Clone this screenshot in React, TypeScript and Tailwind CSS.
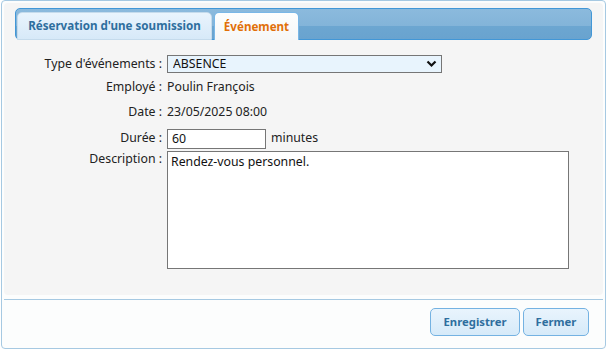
export default function App() {
  return (
    <div className="h-[350px] w-[607px] bg-white font-['Noto_Sans',sans-serif] text-[12.3px] text-[#222]">
      <div className="ml-px flex h-[349px] w-[605px] flex-col rounded-[4px] border border-[#a6c9e2] bg-[#fcfdfd] px-[2px] pt-[2px]">
        <div className="flex h-[292px] flex-col rounded-[4px] bg-[#f5f5f5]">
          <div className="mx-[11px] mt-[5px] flex h-[32px] items-end gap-[2px] rounded-[5px] border border-[#4297d7] bg-[linear-gradient(to_bottom,#8bbadd_0%,#83b4d9_55%,#6ca6d1_58%,#69a3cf_100%)] pl-px">
            <div className="-mb-px flex h-[28px] w-[195px] items-center justify-center rounded-t-[5px] border border-[#c5dbec] bg-[linear-gradient(to_bottom,#e9f4fd,#d7e9f8)] text-[11.6px] font-bold text-[#2e6e9e]">
              Réservation d'une soumission
            </div>
            <div className="-mb-px flex h-[28px] w-[85px] items-center justify-center rounded-t-[5px] border border-b-0 border-[#79b7e7] bg-[linear-gradient(to_bottom,#fdfefe,#f5f7f8)] text-[11.6px] font-bold text-[#e17009]">
              Événement
            </div>
          </div>

          <div className="mt-[13px] flex flex-col">
            <div className="flex h-[22px] items-center">
              <div className="w-[158px] text-right">Type d'événements :</div>
              <div className="relative ml-[5px] h-[18px] w-[275px]">
                <select className="h-[18px] w-[275px] appearance-none border border-[#767676] bg-[#e8f4fd] pl-[5px] text-[12.3px] leading-[16px] text-[#111] outline-none">
                  <option>ABSENCE</option>
                </select>
                <svg className="pointer-events-none absolute right-[5px] top-[5px]" width="11" height="8" viewBox="0 0 11 8">
                  <path d="M1.5 1.5 L5.5 5.5 L9.5 1.5" fill="none" stroke="#111" strokeWidth="2.2" />
                </svg>
              </div>
            </div>
            <div className="flex h-[25px] items-center">
              <div className="w-[158px] text-right">Employé :</div>
              <div className="ml-[5px]">Poulin François</div>
            </div>
            <div className="flex h-[25px] items-center">
              <div className="w-[158px] text-right">Date :</div>
              <div className="ml-[5px]">23/05/2025 08:00</div>
            </div>
            <div className="mt-[2px] flex h-[23px] items-center">
              <div className="w-[158px] text-right">Durée :</div>
              <input
                className="ml-[5px] h-[20px] w-[99px] border border-[#767676] bg-white pl-[4px] text-[12.3px] text-[#111] outline-none"
                defaultValue="60"
              />
              <div className="ml-[5px]">minutes</div>
            </div>
            <div className="mt-px flex">
              <div className="-mt-px w-[158px] text-right">Description :</div>
              <textarea
                className="ml-[5px] h-[118px] w-[402px] resize-none border border-[#767676] bg-white px-[3px] pt-[2px] text-[12.3px] leading-[16px] text-[#111] outline-none"
                defaultValue="Rendez-vous personnel."
              />
            </div>
          </div>
        </div>

        <div className="mt-[4px] flex flex-1 items-start justify-end gap-[3px] border-t border-[#a6c9e2] pr-[14px] pt-[8px]">
          <button className="h-[28px] w-[90px] rounded-[5px] border border-[#74b2e2] bg-[linear-gradient(to_bottom,#e9f4fd,#d6eaf9)] text-[11.3px] font-bold text-[#2e6e9e]">
            Enregistrer
          </button>
          <button className="h-[28px] w-[66px] rounded-[5px] border border-[#74b2e2] bg-[linear-gradient(to_bottom,#e9f4fd,#d6eaf9)] text-[11.3px] font-bold text-[#2e6e9e]">
            Fermer
          </button>
        </div>
      </div>
    </div>
  );
}
